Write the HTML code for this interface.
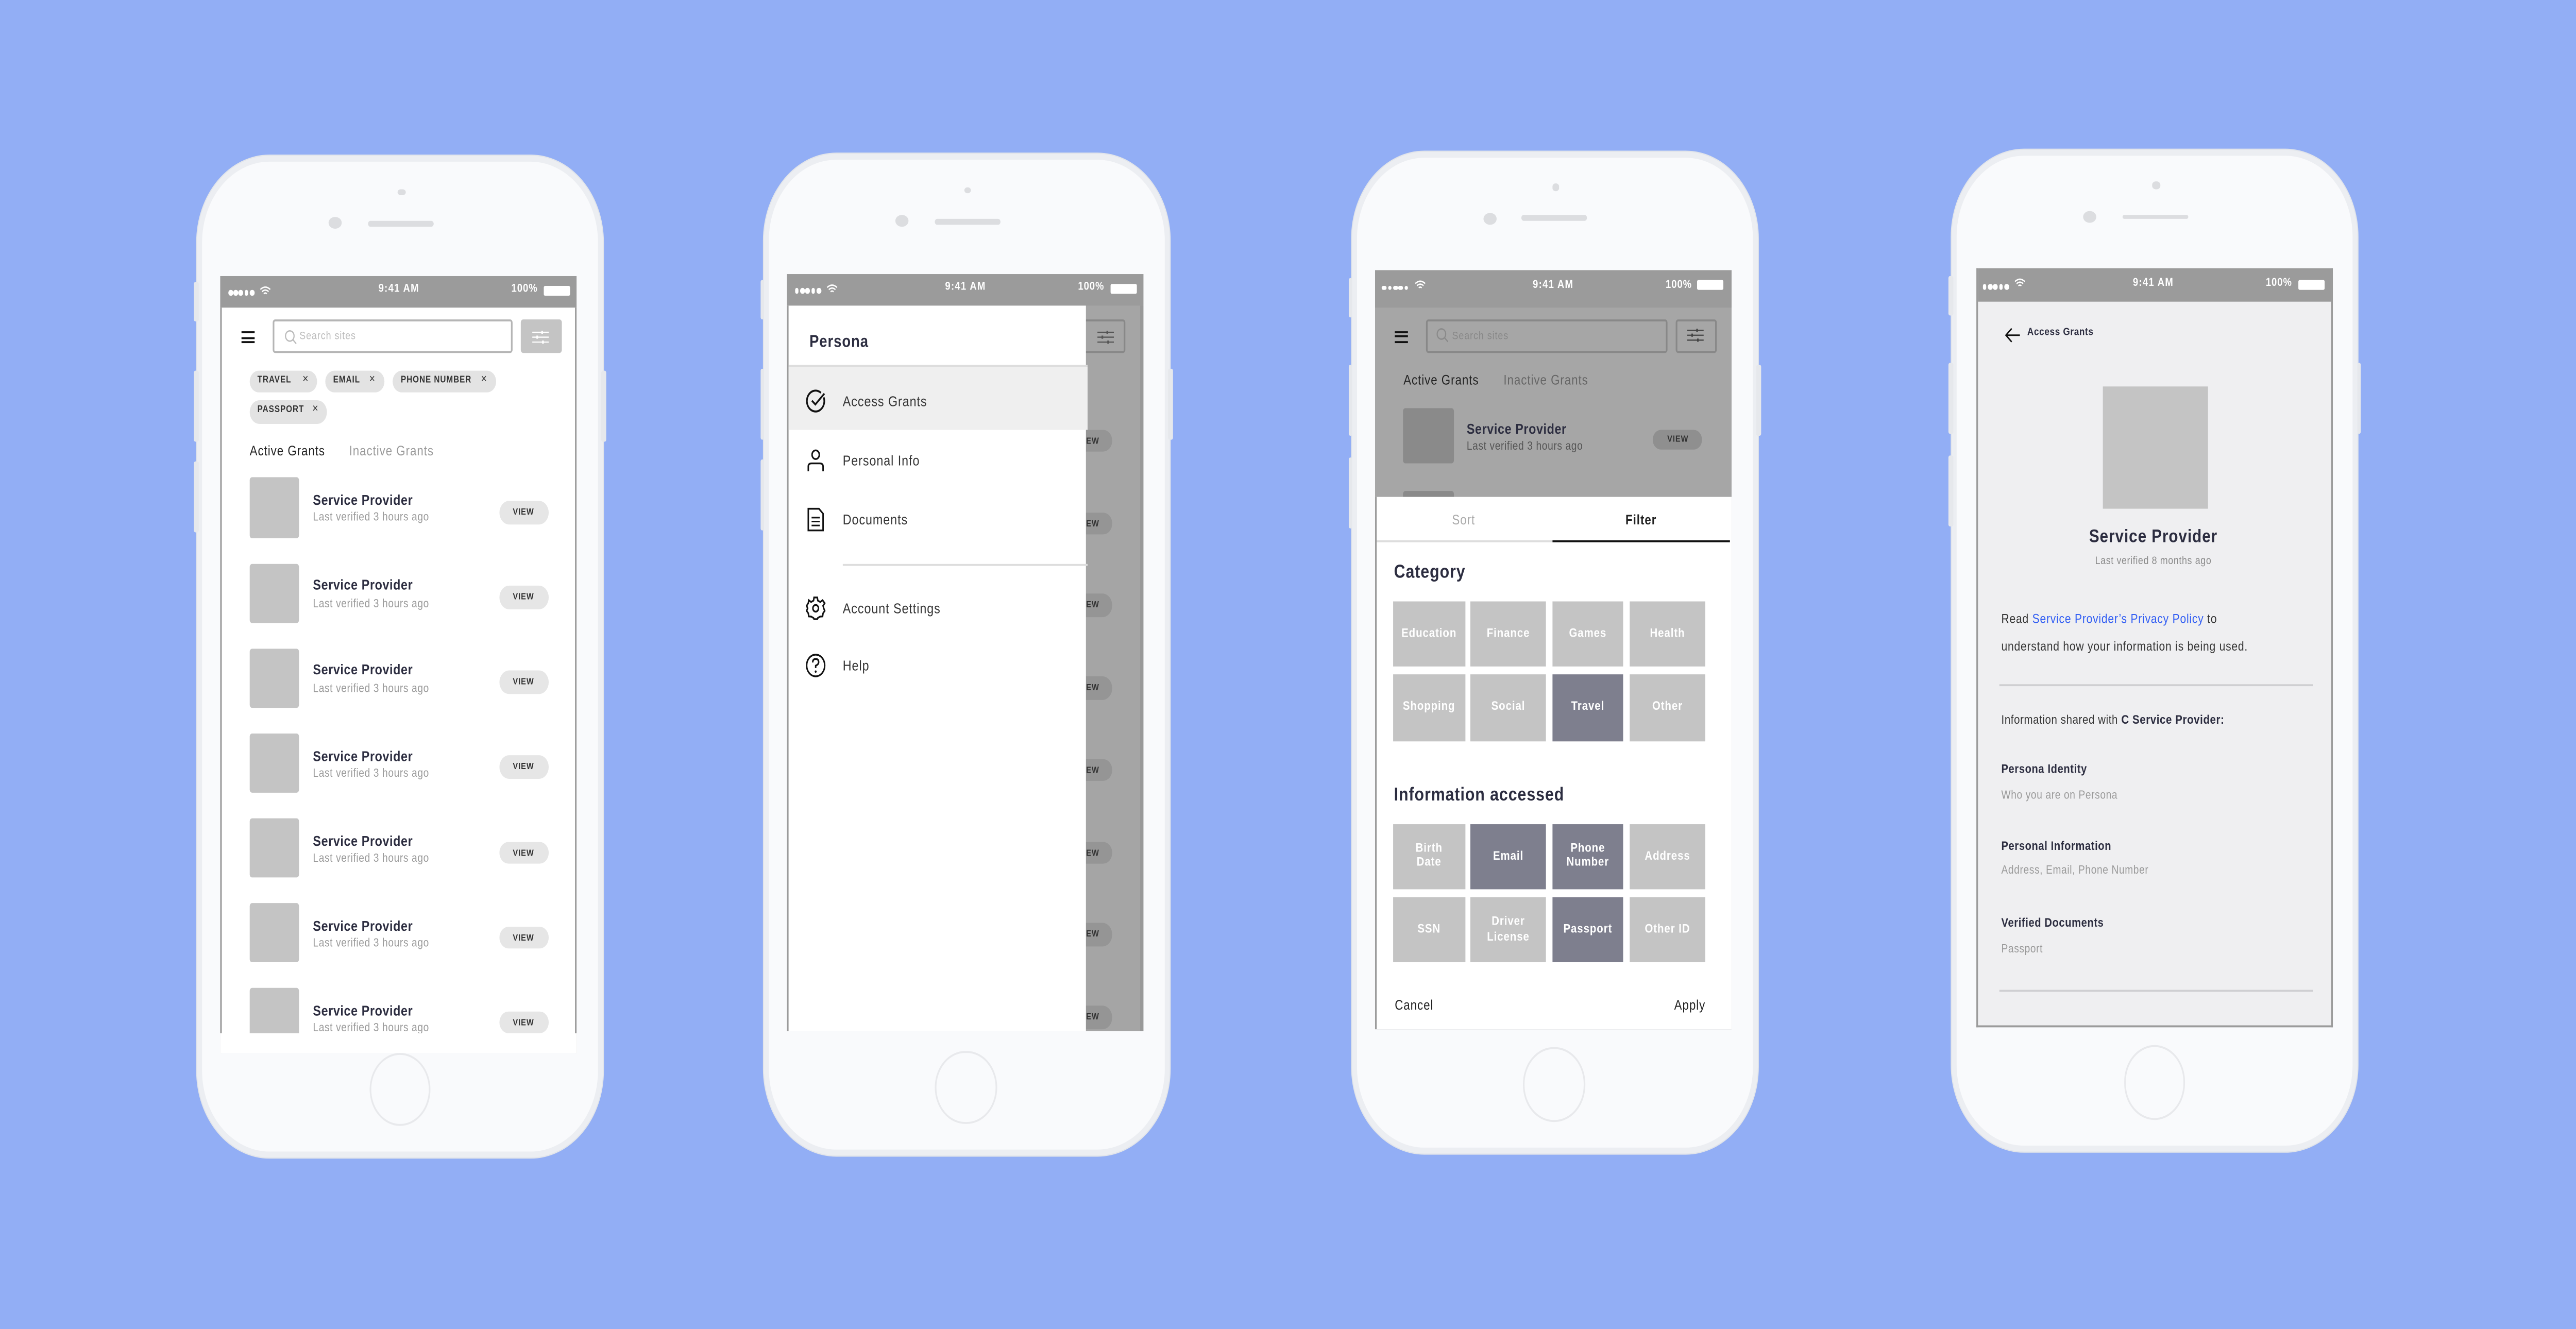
<!DOCTYPE html>
<html><head><meta charset="utf-8"><style>
*{margin:0;padding:0;box-sizing:border-box}
html,body{width:100%;height:100%;overflow:hidden;background:#92aef5}
#sv{position:fixed;left:0;top:0;width:100vw;height:100vh;display:block}
#w{position:relative;width:1568px;height:674px;font-family:"Liberation Sans",sans-serif;overflow:hidden;background:#92aef5}
.ph{position:absolute;width:247px;height:508px;border-radius:44px;background:#eceef2;box-shadow:0 0 0 .6px #e2e5ea}
.face{position:absolute;left:3px;top:3px;right:3px;bottom:3px;border-radius:41px;background:#f9fafc}
.sb{position:absolute;width:2.6px;background:#e6e8ec;border-radius:1px}
.dot{position:absolute;left:122px;top:16.5px;width:4.5px;height:3.5px;border-radius:50%;background:#dcdde0}
.cam{position:absolute;left:80px;top:31px;width:8px;height:6px;border-radius:50%;background:#dcdde0}
.spk{position:absolute;left:103.7px;top:32.8px;width:40px;height:2.6px;border-radius:2px;background:#dcdde0}
.home{position:absolute;left:104.5px;top:454.5px;width:37.5px;height:37.5px;border-radius:50%;border:1px solid #e8e9ec}
.scr{position:absolute;left:14.3px;top:60.5px;width:217px;overflow:hidden;background:#fff}
.st{position:absolute;left:0;top:0;width:217px;height:16.6px;background:#9b9b9b;color:#fff;font-weight:bold;font-size:5.8px}
.st .t{position:absolute;left:0;width:217px;top:4.6px;text-align:center;letter-spacing:.4px}
.st .p{position:absolute;right:24px;top:4.6px;letter-spacing:.3px}
.st .bat{position:absolute;right:4.5px;top:5.4px;width:16px;height:5px;border:.6px solid #fff;background:#fff;border-radius:.8px}
.st .ds{position:absolute;left:4.5px;top:6.3px;height:3px}
.st .ds i{display:inline-block;width:2.8px;height:2.8px;border-radius:50%;background:#fff;margin-right:.5px}
.abs{position:absolute}
.ham{position:absolute;width:8.4px}
.ham i{display:block;height:.9px;background:#111;margin-bottom:1.6px}
.chip{position:absolute;height:11.6px;background:#e3e3e3;border-radius:6px;font-size:4.8px;font-weight:bold;color:#333;line-height:11.6px;padding-left:5px;letter-spacing:.3px}
.chip b{position:absolute;right:5px;top:0;font-weight:normal;font-size:6px}
.sq{position:absolute;left:17.4px;width:30.8px;height:30.5px;background:#c4c4c4;border-radius:1.5px}
.ti{position:absolute;left:56.2px;font-size:7.3px;font-weight:bold;color:#2c2d40;letter-spacing:.2px;white-space:nowrap}
.su{position:absolute;left:56.2px;font-size:6px;color:#9a9a9a;letter-spacing:.2px;white-space:nowrap}
.vw{position:absolute;left:169.3px;width:30.1px;height:11.5px;background:#e6e6e6;border-radius:6px;font-size:4.6px;font-weight:bold;color:#333;text-align:center;line-height:11.5px;letter-spacing:.3px}
.brd{position:absolute;top:16.6px;bottom:0;width:.9px;background:#9b9b9b}
.mi{position:absolute;left:32.8px;font-size:7.3px;color:#333;letter-spacing:.3px;white-space:nowrap}
.ic{position:absolute;left:9.5px;width:13px;height:13px}
.cell{position:absolute;background:#c4c4c4;color:#fff;font-weight:bold;font-size:6.4px;display:flex;align-items:center;justify-content:center;text-align:center;line-height:7.5px;letter-spacing:.3px}
.dk{background:#7e7f8e}
.lb{position:absolute;left:16px;font-size:6.3px;font-weight:bold;color:#2c2d40;letter-spacing:.2px;white-space:nowrap}
.ls{position:absolute;left:16px;font-size:6px;color:#9a9a9a;letter-spacing:.2px;white-space:nowrap}
</style></head><body>
<svg id="sv" viewBox="0 0 1568 674" preserveAspectRatio="none" xmlns="http://www.w3.org/2000/svg"><rect width="1568" height="674" fill="#92aef5"/><foreignObject x="0" y="0" width="1568" height="674"><div xmlns="http://www.w3.org/1999/xhtml" id="w">

<!-- PHONE 1 -->
<div class="ph" style="left:120px;top:79.2px">
<div class="sb" style="left:-2px;top:64px;height:20px"></div><div class="sb" style="left:-2px;top:108.6px;height:36px"></div><div class="sb" style="left:-2px;top:155px;height:36px"></div><div class="sb" style="right:-2px;top:108.6px;height:36px"></div>
<div class="face"></div><div class="dot"></div><div class="cam"></div><div class="spk"></div><div class="home"></div>
<div class="scr" style="height:394.5px">
 <div class="st"><div class="ds"><i></i><i></i><i></i><i></i><i></i></div><svg class="abs" style="left:24px;top:5px" width="7" height="5" viewBox="0 0 7 5"><path d="M.5 1.8Q3.5-.6 6.5 1.8M1.5 2.9Q3.5 1.3 5.5 2.9M2.6 4Q3.5 3.2 4.4 4" stroke="#fff" stroke-width=".7" fill="none"/></svg><div class="t">9:41 AM</div><div class="p">100%</div><div class="bat"></div></div>
 <div class="brd" style="left:0"></div><div class="brd" style="right:0"></div>
 <div class="ham" style="left:12.3px;top:28.5px"><i></i><i></i><i></i></div>
 <div class="abs" style="left:32px;top:22.5px;width:145.7px;height:17px;border:.6px solid #b5b5b5;border-radius:1.5px"></div>
 <svg class="abs" style="left:38.5px;top:27px" width="8" height="8" viewBox="0 0 8 8"><circle cx="3.4" cy="3.4" r="2.6" stroke="#bbb" stroke-width=".7" fill="none"/><path d="M5.3 5.3L7.3 7.3" stroke="#bbb" stroke-width=".7"/></svg>
 <div class="abs" style="left:48px;top:28.5px;font-size:5.6px;color:#bbb;letter-spacing:.3px">Search sites</div>
 <div class="abs" style="left:182.3px;top:22.5px;width:25.4px;height:17px;background:#c4c4c4;border-radius:1.5px"></div>
 <svg class="abs" style="left:189px;top:27px" width="12" height="8" viewBox="0 0 12 8"><path d="M1 1.5H11M1 4H11M1 6.5H11" stroke="#fff" stroke-width=".6"/><path d="M7 .7V2.3M4 3.2V4.8M7.5 5.7V7.3" stroke="#fff" stroke-width="1"/></svg>
 <div class="chip" style="left:17.4px;top:48.1px;width:41.3px">TRAVEL<b>×</b></div>
 <div class="chip" style="left:63.5px;top:48.1px;width:35.8px">EMAIL<b>×</b></div>
 <div class="chip" style="left:104.7px;top:48.1px;width:62.6px">PHONE NUMBER<b>×</b></div>
 <div class="chip" style="left:17.4px;top:63.5px;width:47.3px">PASSPORT<b>×</b></div>
 <div class="abs" style="left:17.7px;top:86.2px;font-size:7px;color:#222;letter-spacing:.3px">Active Grants</div>
 <div class="abs" style="left:78.2px;top:86.2px;font-size:7px;color:#9a9a9a;letter-spacing:.3px">Inactive Grants</div>
 <div class="sq" style="top:102.8px"></div><div class="ti" style="top:109.6px">Service Provider</div><div class="su" style="top:120.8px">Last verified 3 hours ago</div><div class="vw" style="top:114.5px">VIEW</div>
 <div class="sq" style="top:145.9px"></div><div class="ti" style="top:152.7px">Service Provider</div><div class="su" style="top:163.9px">Last verified 3 hours ago</div><div class="vw" style="top:157.6px">VIEW</div>
 <div class="sq" style="top:189px"></div><div class="ti" style="top:195.8px">Service Provider</div><div class="su" style="top:207px">Last verified 3 hours ago</div><div class="vw" style="top:200.7px">VIEW</div>
 <div class="sq" style="top:232.1px"></div><div class="ti" style="top:238.9px">Service Provider</div><div class="su" style="top:250.1px">Last verified 3 hours ago</div><div class="vw" style="top:243.8px">VIEW</div>
 <div class="sq" style="top:275.2px"></div><div class="ti" style="top:282px">Service Provider</div><div class="su" style="top:293.2px">Last verified 3 hours ago</div><div class="vw" style="top:286.9px">VIEW</div>
 <div class="sq" style="top:318.3px"></div><div class="ti" style="top:325.1px">Service Provider</div><div class="su" style="top:336.3px">Last verified 3 hours ago</div><div class="vw" style="top:330px">VIEW</div>
 <div class="sq" style="top:361.4px"></div><div class="ti" style="top:368.2px">Service Provider</div><div class="su" style="top:379.4px">Last verified 3 hours ago</div><div class="vw" style="top:373.1px">VIEW</div>
 <div class="abs" style="left:0;top:384.5px;width:217px;height:10px;background:#fff"></div>
</div></div>

<!-- PHONE 2 -->
<div class="ph" style="left:464.9px;top:78.2px">
<div class="sb" style="left:-2px;top:64px;height:20px"></div><div class="sb" style="left:-2px;top:108.6px;height:36px"></div><div class="sb" style="left:-2px;top:155px;height:36px"></div><div class="sb" style="right:-2px;top:108.6px;height:36px"></div>
<div class="face"></div><div class="dot"></div><div class="cam"></div><div class="spk"></div><div class="home"></div>
<div class="scr" style="height:384.7px;background:#a5a5a5">
 <div class="st"><div class="ds"><i></i><i></i><i></i><i></i><i></i></div><svg class="abs" style="left:24px;top:5px" width="7" height="5" viewBox="0 0 7 5"><path d="M.5 1.8Q3.5-.6 6.5 1.8M1.5 2.9Q3.5 1.3 5.5 2.9M2.6 4Q3.5 3.2 4.4 4" stroke="#fff" stroke-width=".7" fill="none"/></svg><div class="t">9:41 AM</div><div class="p">100%</div><div class="bat"></div></div>
 <div class="abs" style="left:214.4px;top:16.6px;width:2.6px;bottom:0;background:#999"></div>
 <div class="abs" style="left:170px;top:23.6px;width:35.7px;height:17px;border:.6px solid #888;border-radius:1.5px"></div>
 <svg class="abs" style="left:188px;top:28px" width="12" height="8" viewBox="0 0 12 8"><path d="M1 1.5H11M1 4H11M1 6.5H11" stroke="#555" stroke-width=".6"/><path d="M7 .7V2.3M4 3.2V4.8M7.5 5.7V7.3" stroke="#555" stroke-width="1"/></svg>
 <div class="vw" style="left:169px;top:79.2px;width:29px;background:#959595">VIEW</div>
 <div class="vw" style="left:169px;top:121px;width:29px;background:#959595">VIEW</div>
 <div class="vw" style="left:169px;top:162.8px;width:29px;background:#959595">VIEW</div>
 <div class="vw" style="left:169px;top:204.6px;width:29px;background:#959595">VIEW</div>
 <div class="vw" style="left:169px;top:246.3px;width:29px;background:#959595">VIEW</div>
 <div class="vw" style="left:169px;top:288.1px;width:29px;background:#959595">VIEW</div>
 <div class="vw" style="left:169px;top:329.8px;width:29px;background:#959595">VIEW</div>
 <div class="vw" style="left:169px;top:371.7px;width:29px;background:#959595">VIEW</div>
 <div class="abs" style="left:0;top:16.6px;width:182.2px;bottom:0;background:#fff;border-left:.9px solid #9b9b9b">
  <div class="abs" style="left:12.5px;top:13px;font-size:8.6px;font-weight:bold;color:#2c2d40;letter-spacing:.3px">Persona</div>
  <div class="abs" style="left:0;top:29.9px;width:182px;height:.7px;background:#ddd"></div>
  <div class="abs" style="left:0;top:30.6px;width:182px;height:32.2px;background:#efefef"></div>
  <svg class="ic" style="top:41.6px" viewBox="0 0 13 13"><path d="M11.4 4.5A5.3 5.3 0 1 1 9.7 2.2" stroke="#111" stroke-width="1" fill="none"/><path d="M4.2 6.2L6.3 8.1L11.8 2.6" stroke="#111" stroke-width="1" fill="none"/></svg>
  <div class="mi" style="top:43.9px">Access Grants</div>
  <svg class="ic" style="top:71.4px" viewBox="0 0 13 13"><circle cx="6.5" cy="3.6" r="2.2" stroke="#111" stroke-width=".9" fill="none"/><path d="M2 12V9.6Q2 8 4 8H9Q11 8 11 9.6V12" stroke="#111" stroke-width=".9" fill="none"/></svg>
  <div class="mi" style="top:73.7px">Personal Info</div>
  <svg class="ic" style="top:101.3px" viewBox="0 0 13 13"><path d="M2 1H8.5L11 3.5V12H2Z" stroke="#111" stroke-width=".9" fill="none"/><path d="M4 5.5H9M4 7.5H9M4 9.5H9" stroke="#111" stroke-width=".8"/></svg>
  <div class="mi" style="top:103.6px">Documents</div>
  <div class="abs" style="left:32.8px;top:130.7px;width:148.6px;height:.7px;background:#ddd"></div>
  <svg class="ic" style="top:146.7px" viewBox="0 0 13 13"><circle cx="6.5" cy="6.5" r="1.7" stroke="#111" stroke-width=".9" fill="none"/><path d="M5.5 1H7.5L7.8 2.6L9.3 3.3L10.7 2.4L12 3.9L11 5.2L11.4 6.5L12 7.8L11 9L10.7 10.6L9.2 10.7L7.8 11.4L7.5 12H5.5L5.2 11.4L3.7 10.7L2.3 10.6L2 9L1 7.8L1.6 6.5L1 5.2L2 3.9L2.3 2.4L3.7 3.3L5.2 2.6Z" stroke="#111" stroke-width=".9" fill="none"/></svg>
  <div class="mi" style="top:149px">Account Settings</div>
  <svg class="ic" style="top:175.9px" viewBox="0 0 13 13"><circle cx="6.5" cy="6.5" r="5.5" stroke="#111" stroke-width=".9" fill="none"/><path d="M4.7 5Q4.7 3.2 6.5 3.2Q8.3 3.2 8.3 4.8Q8.3 6 6.5 6.6V7.8" stroke="#111" stroke-width=".9" fill="none"/><circle cx="6.5" cy="9.6" r=".6" fill="#111"/></svg>
  <div class="mi" style="top:178.2px">Help</div>
 </div>
</div></div>

<!-- PHONE 3 -->
<div class="ph" style="left:822.6px;top:76.5px">
<div class="sb" style="left:-2px;top:64px;height:20px"></div><div class="sb" style="left:-2px;top:108.6px;height:36px"></div><div class="sb" style="left:-2px;top:155px;height:36px"></div><div class="sb" style="right:-2px;top:108.6px;height:36px"></div>
<div class="face"></div><div class="dot"></div><div class="cam"></div><div class="spk"></div><div class="home"></div>
<div class="scr" style="height:385.4px;background:#a6a6a6">
 <div class="st" style="height:18.9px"><div class="ds"><i></i><i></i><i></i><i></i><i></i></div><svg class="abs" style="left:24px;top:5px" width="7" height="5" viewBox="0 0 7 5"><path d="M.5 1.8Q3.5-.6 6.5 1.8M1.5 2.9Q3.5 1.3 5.5 2.9M2.6 4Q3.5 3.2 4.4 4" stroke="#fff" stroke-width=".7" fill="none"/></svg><div class="t">9:41 AM</div><div class="p">100%</div><div class="bat"></div></div>
 <div class="ham" style="left:11.8px;top:31px"><i></i><i></i><i></i></div>
 <div class="abs" style="left:31.6px;top:24.8px;width:146.3px;height:17px;border:.6px solid #888;border-radius:1.5px"></div>
 <svg class="abs" style="left:37.5px;top:29.3px" width="8" height="8" viewBox="0 0 8 8"><circle cx="3.4" cy="3.4" r="2.6" stroke="#8a8a8a" stroke-width=".7" fill="none"/><path d="M5.3 5.3L7.3 7.3" stroke="#8a8a8a" stroke-width=".7"/></svg>
 <div class="abs" style="left:47px;top:30.8px;font-size:5.6px;color:#888;letter-spacing:.3px">Search sites</div>
 <div class="abs" style="left:183.2px;top:24.8px;width:24.7px;height:17px;border:.6px solid #888;border-radius:1.5px"></div>
 <svg class="abs" style="left:189.5px;top:29.3px" width="12" height="8" viewBox="0 0 12 8"><path d="M1 1.5H11M1 4H11M1 6.5H11" stroke="#444" stroke-width=".6"/><path d="M7 .7V2.3M4 3.2V4.8M7.5 5.7V7.3" stroke="#444" stroke-width="1"/></svg>
 <div class="abs" style="left:17.4px;top:53px;font-size:7px;color:#222;letter-spacing:.3px">Active Grants</div>
 <div class="abs" style="left:78.3px;top:53px;font-size:7px;color:#666;letter-spacing:.3px">Inactive Grants</div>
 <div class="sq" style="left:17.1px;top:69.6px;height:28.9px;background:#8a8a8a"></div>
 <div class="ti" style="left:55.9px;top:75.5px">Service Provider</div><div class="su" style="left:55.9px;top:86.6px;color:#555">Last verified 3 hours ago</div>
 <div class="vw" style="left:169.4px;top:80.8px;height:10.4px;line-height:10.4px;background:#8f8f8f">VIEW</div>
 <div class="sq" style="left:17.1px;top:111.8px;height:10px;background:#8a8a8a"></div>
 <div class="abs" style="left:0;top:115.1px;width:217px;bottom:0;background:#fff">
  <div class="abs" style="left:0;top:8.5px;width:108px;text-align:center;font-size:7px;color:#aaa;letter-spacing:.3px">Sort</div>
  <div class="abs" style="left:108px;top:8.5px;width:108px;text-align:center;font-size:7px;font-weight:bold;color:#222;letter-spacing:.3px">Filter</div>
  <div class="abs" style="left:0;top:22px;width:108px;height:.7px;background:#ddd"></div>
  <div class="abs" style="left:108.3px;top:21.5px;width:108px;height:1.3px;background:#111"></div>
  <div class="abs" style="left:11.6px;top:33.2px;font-size:9.5px;font-weight:bold;color:#2c2d40;letter-spacing:.3px">Category</div>
  <div class="cell" style="left:10.8px;top:53px;width:44.3px;height:33.2px">Education</div>
  <div class="cell" style="left:58.1px;top:53px;width:46.2px;height:33.2px">Finance</div>
  <div class="cell" style="left:107.8px;top:53px;width:43.6px;height:33.2px">Games</div>
  <div class="cell" style="left:155.2px;top:53px;width:45.8px;height:33.2px">Health</div>
  <div class="cell" style="left:10.8px;top:90.2px;width:44.3px;height:33.5px">Shopping</div>
  <div class="cell" style="left:58.1px;top:90.2px;width:46.2px;height:33.5px">Social</div>
  <div class="cell dk" style="left:107.8px;top:90.2px;width:43.6px;height:33.5px">Travel</div>
  <div class="cell" style="left:155.2px;top:90.2px;width:45.8px;height:33.5px">Other</div>
  <div class="abs" style="left:11.6px;top:146.4px;font-size:9.5px;font-weight:bold;color:#2c2d40;letter-spacing:.3px">Information accessed</div>
  <div class="cell" style="left:10.8px;top:165.7px;width:44.3px;height:33.3px">Birth<br/>Date</div>
  <div class="cell dk" style="left:58.1px;top:165.7px;width:46.2px;height:33.3px">Email</div>
  <div class="cell dk" style="left:107.8px;top:165.7px;width:43.6px;height:33.3px">Phone<br/>Number</div>
  <div class="cell" style="left:155.2px;top:165.7px;width:45.8px;height:33.3px">Address</div>
  <div class="cell" style="left:10.8px;top:202.9px;width:44.3px;height:33.5px">SSN</div>
  <div class="cell" style="left:58.1px;top:202.9px;width:46.2px;height:33.5px">Driver<br/>License</div>
  <div class="cell dk" style="left:107.8px;top:202.9px;width:43.6px;height:33.5px">Passport</div>
  <div class="cell" style="left:155.2px;top:202.9px;width:45.8px;height:33.5px">Other ID</div>
  <div class="abs" style="left:12.1px;top:255.2px;font-size:7px;color:#222;letter-spacing:.3px">Cancel</div>
  <div class="abs" style="right:15.8px;top:255.2px;font-size:7px;color:#222;letter-spacing:.3px">Apply</div>
 </div>
 <div class="abs" style="left:0;top:115px;width:.9px;bottom:0;background:#9b9b9b"></div>
</div></div>

<!-- PHONE 4 -->
<div class="ph" style="left:1188.4px;top:75.9px">
<div class="sb" style="left:-2px;top:64px;height:20px"></div><div class="sb" style="left:-2px;top:108.6px;height:36px"></div><div class="sb" style="left:-2px;top:155px;height:36px"></div><div class="sb" style="right:-2px;top:108.6px;height:36px"></div>
<div class="face"></div><div class="dot"></div><div class="cam"></div><div class="spk"></div><div class="home"></div>
<div class="scr" style="height:384.7px;background:#efeff1;border:1.5px solid #9b9b9b;border-top:0">
 <div class="st" style="left:-1.5px"><div class="ds"><i></i><i></i><i></i><i></i><i></i></div><svg class="abs" style="left:24px;top:5px" width="7" height="5" viewBox="0 0 7 5"><path d="M.5 1.8Q3.5-.6 6.5 1.8M1.5 2.9Q3.5 1.3 5.5 2.9M2.6 4Q3.5 3.2 4.4 4" stroke="#fff" stroke-width=".7" fill="none"/></svg><div class="t">9:41 AM</div><div class="p">100%</div><div class="bat"></div></div>
 <svg class="abs" style="left:16px;top:30px" width="10" height="8" viewBox="0 0 10 8"><path d="M9.5 4H1M4.5 .6L1 4L4.5 7.4" stroke="#111" stroke-width=".8" fill="none"/></svg>
 <div class="abs" style="left:30.3px;top:29.3px;font-size:5.4px;font-weight:bold;color:#2c2d40;letter-spacing:.2px">Access Grants</div>
 <div class="abs" style="left:76.3px;top:59.7px;width:63.9px;height:62.3px;background:#c4c4c4"></div>
 <div class="abs" style="left:0;width:214px;top:130.2px;text-align:center;font-size:9.3px;font-weight:bold;color:#2c2d40;letter-spacing:.3px">Service Provider</div>
 <div class="abs" style="left:0;width:214px;top:145.3px;text-align:center;font-size:5.6px;color:#8a8a8a;letter-spacing:.2px">Last verified 8 months ago</div>
 <div class="abs" style="left:14.5px;top:171.7px;font-size:6.6px;color:#333;line-height:13.9px;letter-spacing:.25px;white-space:nowrap">Read <span style="color:#2f5cf3">Service Provider’s Privacy Policy</span> to<br/>understand how your information is being used.</div>
 <div class="abs" style="left:13.8px;top:210.3px;width:190.1px;height:.7px;background:#cfcfd2"></div>
 <div class="abs" style="left:14.5px;top:225.3px;font-size:6.4px;color:#333;letter-spacing:.2px;white-space:nowrap">Information shared with <b style="color:#2c2d40">C Service Provider:</b></div>
 <div class="lb" style="left:14.5px;top:250.8px">Persona Identity</div><div class="ls" style="left:14.5px;top:264.4px">Who you are on Persona</div>
 <div class="lb" style="left:14.5px;top:290px">Personal Information</div><div class="ls" style="left:14.5px;top:302.9px">Address, Email, Phone Number</div>
 <div class="lb" style="left:14.5px;top:328.8px">Verified Documents</div><div class="ls" style="left:14.5px;top:342.4px">Passport</div>
 <div class="abs" style="left:13.8px;top:366.1px;width:190.1px;height:.7px;background:#cfcfd2"></div>
</div></div>

</div></foreignObject></svg></body></html>
